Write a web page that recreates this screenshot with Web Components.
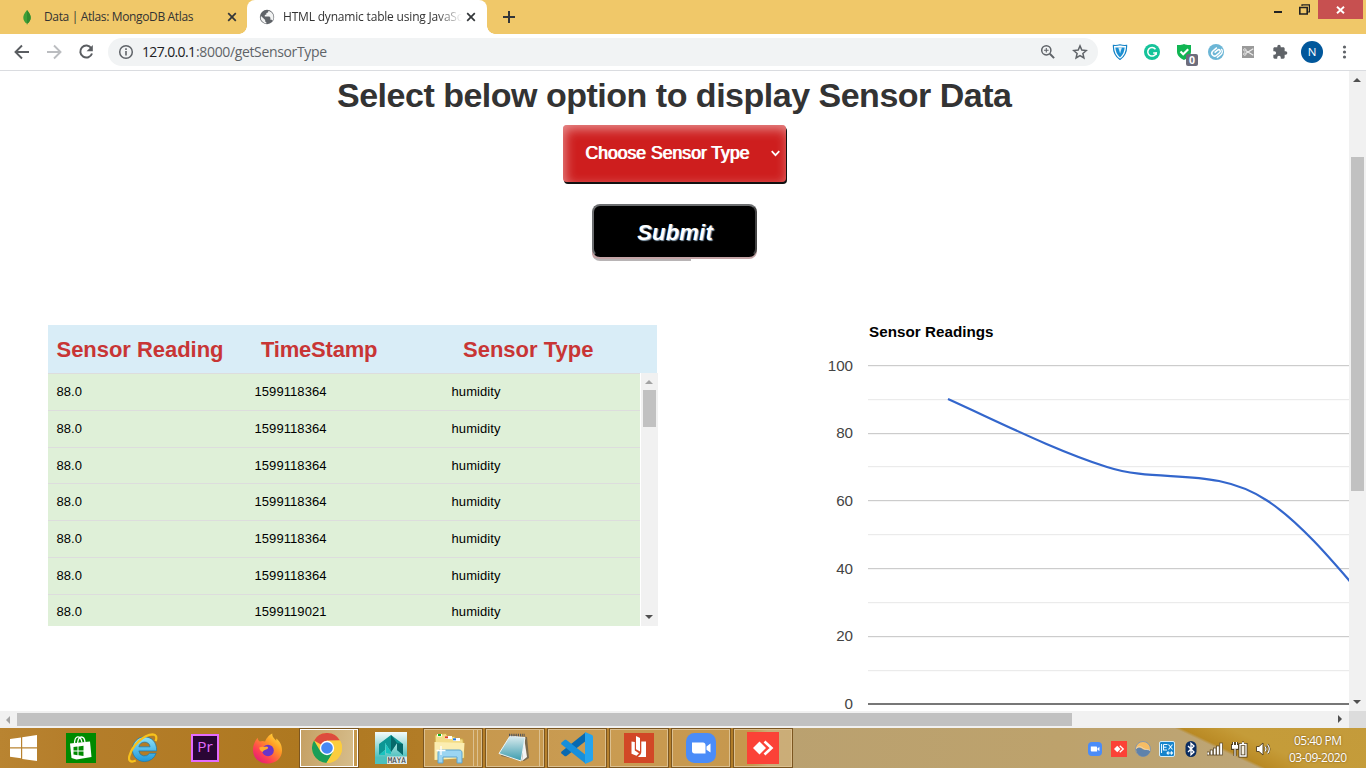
<!DOCTYPE html>
<html lang="en">
<head>
<meta charset="utf-8">
<title>HTML dynamic table using JavaScript</title>
<style>
html,body{margin:0;padding:0;width:1366px;height:768px;overflow:hidden;background:#fff;font-family:"Liberation Sans",Arial,sans-serif}
</style>
</head>
<body>
<desktop-screen></desktop-screen>
<script>
const define=(name,html,after)=>{
  const t=document.createElement('template');
  t.innerHTML=html;
  customElements.define(name,class extends HTMLElement{
    connectedCallback(){
      if(this.shadowRoot)return;
      this.attachShadow({mode:'open'}).appendChild(t.content.cloneNode(true));
      if(after)after.call(this,this.shadowRoot);
    }
  });
};

/* Single line of text that is tracked to a given advance width. */
define('fit-text',`<style>:host{display:inline-block;white-space:pre}span{display:inline-block}</style><span></span>`,function(r){
  const s=r.querySelector('span'),w=parseFloat(this.getAttribute('w'));
  s.textContent=this.getAttribute('text');
  const n=s.textContent.length,cur=s.getBoundingClientRect().width;
  if(w&&cur){const d=(w-cur)/(n-1);s.style.letterSpacing=d+'px';s.style.marginRight=-d+'px';}
});

const ICONS={
leaf:[20,20,`<path d="M10 3C7 6.500 6.200 8.600 6.300 11c.1 2.600 1.700 4.500 3.400 5.600L10 18l.3-1.400c1.700-1.100 3.300-3 3.400-5.600C13.800 8.600 13 6.500 10 3z" fill="#3fa037"/><path d="M10 3c3 3.500 3.800 5.600 3.700 8-.1 2.600-1.700 4.500-3.400 5.600L10 18z" fill="#318b2f"/>`],
globe:[16,16,`<circle cx="8" cy="8" r="7.200" fill="#5f6368"/><path d="M2 7l4.200 4v1.400l1.200 1v1C4 14 1.600 11.500 1.700 8zM9.500 1.800L9 3.500 7.400 4v1.600L5.800 6v1.500h4.600l1 1.300v2h1.500l.9 1C15 9.500 15 5.500 12 3z" fill="#fff" opacity=".92"/>`],
x:[10,10,`<path d="M1.200 1.200l7.600 7.600M8.800 1.200L1.200 8.800" stroke="#333639" stroke-width="1.700"/>`],
plus:[12,12,`<path d="M6 0v12M0 6h12" stroke="#333639" stroke-width="2"/>`],
back:[16,16,`<path d="M15 8H2M8 1.500L1.500 8 8 14.500" fill="none" stroke="#5a5d61" stroke-width="1.900"/>`],
fwd:[16,16,`<path d="M1 8h13M8 1.500L14.500 8 8 14.500" fill="none" stroke="#bbbdc0" stroke-width="1.900"/>`],
reload:[16,16,`<path d="M13.300 4.200A6 6 0 1 0 14 9.500" fill="none" stroke="#5a5d61" stroke-width="2"/><path d="M14.800 1v6.200H8.600z" fill="#5a5d61"/>`],
info:[16,16,`<circle cx="8" cy="8" r="6.300" fill="none" stroke="#5f6368" stroke-width="1.500"/><path d="M8 7v4.500M8 4.300v1.700" stroke="#5f6368" stroke-width="1.600"/>`],
mag:[16,16,`<circle cx="6.300" cy="6.300" r="4.600" fill="none" stroke="#5f6368" stroke-width="1.500"/><path d="M9.800 9.800l4.300 4.300" stroke="#5f6368" stroke-width="2"/><path d="M6.300 4v4.600M4 6.300h4.600" stroke="#5f6368" stroke-width="1.100"/>`],
star:[16,16,`<path d="M8 1.900l1.800 4.200 4.500.4-3.400 3 1 4.500L8 11.600 4.100 14l1-4.500-3.400-3 4.500-.4z" fill="none" stroke="#5f6368" stroke-width="1.500"/>`],
vshield:[16,16,`<path d="M8 .8c2.200.7 4.600.8 6.600.6.2 6-1.600 11-6.600 14C3 12.400 1.200 7.400 1.400 1.400 3.400 1.600 5.800 1.500 8 .8z" fill="#fff" stroke="#1583c7" stroke-width="1.200"/><path d="M3.300 3.600h9.400c-.3 4-1.700 7.300-4.700 9.900C5 10.900 3.600 7.600 3.300 3.600z" fill="#1b8fd2"/><path d="M6.300 3.600h3.600L8.100 9.500z" fill="#d7eefa"/>`],
gram:[16,16,`<circle cx="8" cy="8" r="8" fill="#15c39a"/><path d="M11.500 5.200A4.300 4.300 0 1 0 12.200 9H9.200" fill="none" stroke="#fff" stroke-width="1.500"/><path d="M12.200 8.300v2.800" stroke="#fff" stroke-width="1.300"/>`],
check:[22,22,`<path d="M8 0c2 1 4.500 1.200 7 1v6.500c0 4-3 6.500-7 8.500-4-2-7-4.500-7-8.500V1c2.500.2 5 0 7-1z" fill="#10b552"/><path d="M4.500 7.500l2.700 2.800 5-5" stroke="#fff" stroke-width="2.100" fill="none"/><rect x="10" y="10" width="12" height="12" rx="2" fill="#6d6d7c"/><text x="16" y="19.800" font-size="10.500" font-weight="bold" fill="#fff" text-anchor="middle" font-family="Open Sans,sans-serif">0</text>`],
swirl:[16,16,`<circle cx="8" cy="8" r="8" fill="#6cb6d6"/><g transform="rotate(-40 8 8)" fill="none" stroke="#fff" stroke-width="1.500"><path d="M11.500 5.200H6.200a2.800 2.800 0 0 0 0 5.600h4.300a1.600 1.600 0 0 0 0-3.200H6.500"/><path d="M5 13h5.500a3.800 3.800 0 0 0 3.500-4"/></g>`],
cut:[14,14,`<rect x="1" y="1" width="12" height="12" fill="#9a9a9a"/><path d="M12.300 3.700L5 8.300M12.300 10.300L5 5.700" stroke="#eee" stroke-width="1.100"/><circle cx="3.800" cy="4.900" r="1.200" fill="none" stroke="#eee" stroke-width=".9"/><circle cx="3.800" cy="9.100" r="1.200" fill="none" stroke="#eee" stroke-width=".9"/>`],
puzzle:[24,24,`<path fill="#5f6368" d="M20.500 11H19V7c0-1.100-.9-2-2-2h-4V3.500a2.500 2.500 0 0 0-5 0V5H4c-1.100 0-2 .9-2 2v3.800h1.500a2.700 2.700 0 0 1 0 5.400H2V20c0 1.100.9 2 2 2h3.800v-1.500a2.700 2.700 0 0 1 5.400 0V22H17c1.100 0 2-.9 2-2v-4h1.500a2.500 2.500 0 0 0 0-5z"/>`],
avatar:[22,22,`<circle cx="11" cy="11" r="11" fill="#01579b"/><text x="11" y="15" text-anchor="middle" font-family="Open Sans,sans-serif" font-size="11.500" fill="#fff">N</text>`],
dots:[16,16,`<g fill="#5f6368"><circle cx="8.500" cy="3" r="1.600"/><circle cx="8.500" cy="8" r="1.600"/><circle cx="8.500" cy="13" r="1.600"/></g>`],
up:[8,4,`<path d="M0 4L4 0l4 4z" fill="currentColor"/>`],
down:[8,4,`<path d="M0 0l4 4 4-4z" fill="currentColor"/>`],
left:[4,8,`<path d="M4 0L0 4l4 4z" fill="currentColor"/>`],
right:[4,8,`<path d="M0 0l4 4-4 4z" fill="currentColor"/>`],
win:[27,26,`<path d="M0 4l11-1.600V12.300H0zM12.200 2.200L27 0v12.300H12.200zM0 13.500h11v9.800L0 21.800zM12.200 13.500H27V26l-14.800-2.100z" fill="#fff"/>`],
store:[30,30,`<rect width="30" height="30" fill="#008a00"/><path d="M4 10.500l20-2 1.500 15.500-15 2.500L5.500 25z" fill="#fff"/><path d="M8.500 11c0-9 6-9.500 7.500-1.500M11.500 10.500c1-9 7-8 7.500-1" fill="none" stroke="#fff" stroke-width="1.300"/><path d="M7.500 14l4-.5V17.500h-4zM12.500 13.400l5-.6v4.700h-5zM7.500 18.500h4v3.700l-4-.6zM12.500 18.500h5V23l-5-.7z" fill="#008a00"/>`],
ie:[32,32,`<defs><linearGradient id="a" x2="0" y2="1"><stop stop-color="#8fe3fb"/><stop offset="1" stop-color="#2097d8"/></linearGradient></defs><path d="M29 21A12.600 12.600 0 0 1 17 29.500C10 29.500 4.500 24 4.500 17S10 4 17 4s12.800 5 12.600 14.500H11.200a6 6 0 0 0 11 2.500zM11.200 14.300h11.600c-.6-6.600-10.600-6.600-11.600 0z" fill="url(#a)" stroke="#1478b4" stroke-width=".7" fill-rule="evenodd"/><path d="M8 28.500C2.500 31 0 28.500 1.500 23.500 4.500 13 16 1.800 25.500 1.500c3.500 0 4.600 2.700 3 7" fill="none" stroke="#f8c21c" stroke-width="2.300"/>`],
pr:[28,28,`<rect x="1" y="1" width="26" height="26" fill="#2a0634" stroke="#e36bff" stroke-width="2"/><text x="6.300" y="18" font-family="Open Sans,sans-serif" font-size="15" textLength="15.500" lengthAdjust="spacingAndGlyphs" fill="#e36bff">Pr</text>`],
ff:[32,32,`<defs><linearGradient id="f" x1="1" x2=".2" y2="1"><stop stop-color="#fff14a"/><stop offset=".4" stop-color="#ff9a24"/><stop offset=".75" stop-color="#ff4052"/><stop offset="1" stop-color="#e01a7c"/></linearGradient></defs><path d="M6 5c0 2 .7 3 2 3.800 2-.8 4-.8 5.500 0C15 5 18 1.500 21 .5c-.5 3 1.500 5 4 7.500 0-1 0-1.500.2-2.200C30 10 31 14 31 18c0 8-6.500 13.500-15 13.500S1 25.500 1 17.500C1 13 3 8 6 5z" fill="url(#f)"/><circle cx="16.500" cy="18" r="6" fill="#6a35c8"/><path d="M7.500 15c3-2 5 0 8-1 2 1 1 2.500-1 3-2 .6-2.500 1-3.500 2.500-2-.5-3.500-2.500-3.500-4.500z" fill="#ffab2e"/>`],
chrome:[30,30,`<circle cx="15" cy="15" r="15" fill="#fbcd3e"/><path d="M15 15L2 7.500A15 15 0 0 1 28 7.500L15 8z" fill="#dd4b3e"/><path d="M2 7.500A15 15 0 0 0 14.500 30L21.500 18.500 8.500 18.500z" fill="#1a9e58"/><path d="M28 7.500H15v7l6.500 4L14.500 30A15 15 0 0 0 28 7.500z" fill="#fbcd3e"/><circle cx="15" cy="15" r="7.200" fill="#fff"/><circle cx="15" cy="15" r="5.800" fill="#4688f4"/>`],
maya:[32,32,`<defs><linearGradient id="m" x2="0" y2="1"><stop stop-color="#f4fbfb"/><stop offset=".8" stop-color="#4cc0bd"/></linearGradient></defs><rect width="32" height="32" fill="url(#m)"/><path d="M4 23V12L16 3l12 9v11l-6-5v-7l-6 9-6-9v7z" fill="#0c9694"/><path d="M16 3l6 8-6 9zM28 12v11l-6-5v-7z" fill="#06686a"/><path d="M10 11l6 9v2l-5-1zM4 23l6-5v5z" fill="#18c3bf"/><rect x="12" y="24.500" width="20" height="7.500" fill="#dfe8e8"/><text x="12.800" y="31.200" font-family="DejaVu Sans Mono,monospace" font-size="7.800" textLength="18" lengthAdjust="spacingAndGlyphs" fill="#333">MAYA</text>`],
folder:[32,32,`<path d="M2 3l11-1.500 1.500 2.500 7 .5 1 2 7.500.5 1.500 19-29 2z" fill="#f3dc86" stroke="#c9a545"/><path d="M1.500 10l30 1-1 15-29 2z" fill="#fbedb0"/><rect x="4" y="2" width="5" height="2.500" fill="#fff"/><rect x="5" y="2" width="3" height="2" fill="#13b31b"/><rect x="12" y="4" width="7" height="3" fill="#fff"/><rect x="12" y="4.300" width="3" height="2" fill="#df4325"/><rect x="20" y="6" width="7" height="3" fill="#fff"/><rect x="20" y="6.300" width="3" height="2" fill="#2478df"/><path d="M5 31V21c0-2 1-3 3-3h18c2 0 3 1 3 3v10h-5v-6H10v6z" fill="#9bd5f2" stroke="#5ca3cc"/><path d="M8 14v9M3.500 18.500h9" stroke="#fff" stroke-width="1.300"/>`],
note:[32,32,`<defs><linearGradient id="n" x2="0" y2="1"><stop stop-color="#dcecef"/><stop offset="1" stop-color="#399bad"/></linearGradient></defs><path d="M13 3l17 2 2 21-5 3L4 24z" fill="#7a6a4e"/><path d="M27 5l3 20-5 4z" fill="#f3f3f3"/><path d="M13 4l15 1.500L24 29 2 21.500z" fill="url(#n)" stroke="#edf5f6"/><path d="M12 3h16" stroke="#555" stroke-width="2.400" stroke-dasharray="1.200 1"/>`],
code:[32,32,`<path d="M.5 21.500L3.500 24c.8.500 1.400.3 2-.1L26 8 24.500.5.6 19.400c-.6.700-.6 1.400-.1 2.100z" fill="#0869b0"/><path d="M.5 10.500L3.500 8c.8-.5 1.400-.3 2 .1L26 24l-1.500 7.500L.6 12.600c-.6-.7-.6-1.400-.1-2.100z" fill="#178fdb"/><path d="M24 0l7 3c.7.400 1 .9 1 1.700v22.600c0 .8-.4 1.300-1 1.700l-7 3z" fill="#25a4ef"/>`],
book:[30,30,`<rect width="30" height="30" fill="#d24726"/><path d="M7.500 8.500l3.300.6V17.500l4.200 2.800-2.500 2.400-5-2zM12 3l4 2v13.500L12 16.300zM17.300 8.500H22V24h-8l1-1.200c1.700-1 2.300-2.300 2.300-4.300z" fill="#fff"/>`],
zoom:[30,30,`<rect width="30" height="30" rx="8.500" fill="#4a8cf8"/><path d="M6 9.500h11c1.500 0 2.500 1 2.500 2.500v8.500h-11C7 20.500 6 19.500 6 18zM20.500 13.500L24.500 10.500V19.500L20.500 16.700z" fill="#fff"/>`],
desk:[32,32,`<rect width="32" height="32" fill="#fb4237"/><path d="M6 16l6.500-6.500L19 16l-6.500 6.500z" fill="#fff"/><path d="M17.500 9.500L24.500 16l-7 6.500" fill="none" stroke="#fff" stroke-width="2.600"/>`],
cloud:[16,16,`<circle cx="8" cy="8" r="7.500" fill="#f6bd65" stroke="#8797a8"/><path d="M1 8.500c3-4 5.500-1 7.500 0s5-1 6.700 1.500C14 14 11 15.500 8 15.500S1.500 13 1 8.500z" fill="#5f82ab"/><path d="M1 7.500c3-3 5.500-1.500 7.500 0s4.500.5 6.500 2" stroke="#e8e2d6" stroke-width=".7" fill="none"/>`],
intel:[16,16,`<rect x=".5" y=".5" width="15" height="15" rx="1.500" fill="#1583cc" stroke="#d4ecf8"/><path d="M4.500 3.500h4M4.500 3.500v5.500h3.500M4.500 6.200h3M9.500 3.500l4 5M13.500 3.500l-4 5M8 12h5.500M9.500 10.500L8 12l1.500 1.500M12 10.500l1.500 1.500-1.500 1.500M2.500 3v9" stroke="#e8f7ff" stroke-width="1.100" fill="none"/>`],
bt:[16,18,`<rect x="2.500" y="1" width="11" height="16" rx="5.500" fill="#0a2c61"/><path d="M5 6l6 6-3 2.700V3.300L11 6l-6 6" fill="none" stroke="#fff" stroke-width="1.300"/>`],
sig:[16,14,`<g fill="#fff" stroke="#4d3b1b" stroke-width=".7"><rect x="0" y="10" width="2.600" height="3"/><rect x="3.200" y="8" width="2.600" height="5"/><rect x="6.400" y="6" width="2.600" height="7"/><rect x="9.600" y="4" width="2.600" height="9"/><rect x="12.800" y="1" width="2.800" height="12"/></g>`],
bat:[17,18,`<g fill="none" stroke="#4d3b1b" stroke-width="3"><path d="M9 4.500h6V16H9zM11 3h2M1.500 5.500h5v3h-5zM4 9v7M2.500 2v4M5.500 2v4"/></g><path d="M9 4.500h6V16H9zM11 3h2" fill="#4d3b1b" stroke="#fff" stroke-width="1.300"/><path d="M10.600 6h2.800v8.500h-2.800z" fill="#f5efdf"/><path d="M1.500 5.500h5v2.700h-5zM4 9v7M2.500 2v4M5.500 2v4" fill="#fff" stroke="#fff" stroke-width="1.100"/>`],
vol:[17,16,`<path d="M1.500 5.500h2.500L8 2v12L4 10.500H1.500z" fill="#fff" stroke="#4d3b1b" stroke-width=".9"/><g fill="none" stroke="#4d3b1b" stroke-width="2.300"><path d="M10 5.500q2 2.500 0 5M12.500 3.500q3.500 4.500 0 9"/></g><g fill="none" stroke="#fff" stroke-width="1.200"><path d="M10 5.500q2 2.500 0 5M12.500 3.500q3.500 4.500 0 9"/></g>`],
chev:[9,7,`<path d="M.7 1.200l3.800 4 3.800-4" fill="none" stroke="#fff" stroke-width="1.700"/>`],
restore:[11,11,`<path d="M3 2V.8h7.400V8H9" fill="none" stroke="#222" stroke-width="1.200"/><path d="M.8 3.500h7.400V10H.8z" fill="none" stroke="#222" stroke-width="1.600"/>`],
close:[9,8,`<path d="M1 .7l7 6.600M8 .7L1 7.300" stroke="#fff" stroke-width="1.900"/>`]
};
define('ui-icon',`<style>:host{display:block;flex:none}svg{display:block}</style>`,function(r){
  const [w,h,body]=ICONS[this.getAttribute('name')],s=+this.getAttribute('size')||w;
  const d=document.createElement('div');
  d.innerHTML=`<svg width="${s}" height="${s*h/w}" viewBox="0 0 ${w} ${h}">${body}</svg>`;
  r.appendChild(d);
});

define('browser-tabs',`<style>
:host{display:flex;height:34px;background:#f0c869;font:12px "Open Sans","Noto Sans",sans-serif;color:#333;position:relative}
.tab{display:flex;align-items:center;box-sizing:border-box}
.one{width:247px;padding:0 10px 0 17px}
.two{width:240px;background:#fff;border-radius:8px 8px 0 0;padding:0 11px 0 12px;position:relative}
.two:before,.two:after{content:"";position:absolute;bottom:0;width:8px;height:8px}
.two:before{left:-8px;background:radial-gradient(circle at 0 0,transparent 7.5px,#fff 8px)}
.two:after{right:-8px;background:radial-gradient(circle at 100% 0,transparent 7.5px,#fff 8px)}
.name{flex:1;overflow:hidden;white-space:nowrap;margin-top:-1px}
.one .name{margin-left:7px}.two .name{margin-left:8px;margin-right:2px;-webkit-mask-image:linear-gradient(90deg,#000 154px,transparent 179px)}
.new{padding:11px 0 0 16px}
.ctl{margin-left:auto;display:flex;padding-right:3px;align-items:flex-start}
.min{width:8px;height:2px;background:#222;margin:11px 17px 0 0}
.ctl ui-icon.r{margin:4px 8px 0 0}
.cl{width:45px;height:19px;background:#c75050;display:grid;place-items:center}
</style>
<div class="tab one"><ui-icon name="leaf"></ui-icon><div class="name"><fit-text text="Data | Atlas: MongoDB Atlas" w="149.500"></fit-text></div><ui-icon name="x"></ui-icon></div>
<div class="tab two"><ui-icon name="globe"></ui-icon><div class="name"><fit-text text="HTML dynamic table using JavaSc" w="179.500"></fit-text></div><ui-icon name="x"></ui-icon></div>
<div class="new"><ui-icon name="plus"></ui-icon></div>
<div class="ctl"><div class="min"></div><ui-icon class="r" name="restore"></ui-icon><div class="cl"><ui-icon name="close"></ui-icon></div></div>`);

define('browser-toolbar',`<style>
:host{display:flex;height:36px;align-items:center;background:#fff;border-bottom:1px solid #dadce0;font:14px "Open Sans","Noto Sans",sans-serif;color:#5f6368}
.b{width:32px;display:grid;place-items:center}
.nav{display:flex;padding:0 6px}
.box{width:990px;height:28px;border-radius:14px;background:#f1f3f4;display:flex;align-items:center;box-sizing:border-box;padding:0 2px 0 10px;margin-right:6px}
.url{margin-left:8px;flex:1;display:flex;margin-top:-1px}.host{color:#202124}
.chk{padding:6px 0 0 6px;width:26px}
</style>
<div class="nav"><div class="b"><ui-icon name="back"></ui-icon></div><div class="b"><ui-icon name="fwd"></ui-icon></div><div class="b"><ui-icon name="reload"></ui-icon></div></div>
<div class="box"><ui-icon name="info"></ui-icon><div class="url"><fit-text class="host" text="127.0.0.1" w="54"></fit-text><fit-text text=":8000/getSensorType" w="131"></fit-text></div><div class="b"><ui-icon name="mag"></ui-icon></div><div class="b"><ui-icon name="star"></ui-icon></div></div>
<div class="b"><ui-icon name="vshield"></ui-icon></div><div class="b"><ui-icon name="gram"></ui-icon></div><div class="b chk"><ui-icon name="check"></ui-icon></div><div class="b"><ui-icon name="swirl"></ui-icon></div><div class="b"><ui-icon name="cut"></ui-icon></div><div class="b"><ui-icon name="puzzle" size="16"></ui-icon></div><div class="b"><ui-icon name="avatar"></ui-icon></div><div class="b"><ui-icon name="dots"></ui-icon></div>`);

define('sensor-form',`<style>
:host{display:flex;flex-direction:column;align-items:center;width:1349px}
h1,.sel,button,.shade{flex:none}
h1{margin:4px 0 0;font-size:34px;line-height:41px;color:#333}
.sel{display:flex;align-items:center;box-sizing:border-box;width:223px;height:57px;margin-top:9px;padding:0 6px 0 22px;border-radius:4px;background:#ce1e1e;box-shadow:1px 2px 0 #111,inset 2px 4px 12px rgba(255,255,255,.5);color:#fff;font-size:17.600px;text-shadow:1px 0 0 #fff}
.sel fit-text{flex:1}
button{all:unset;flex:none;display:block;box-sizing:border-box;width:165px;height:53px;margin-top:22px;border:2px solid #6c6e70;border-right-color:#444;border-bottom-color:#000;border-radius:8px;background:#000;box-shadow:0 2px 0 #c4a4a6;color:#fff;text-align:center;padding-left:1px;font:italic bold 22px/53px "Liberation Sans",Arial,sans-serif;text-shadow:1px 1px 1px #8fa6b8}
.shade{width:99px;height:10px;margin-top:-6px;align-self:flex-start;margin-left:592px;background:linear-gradient(#c4a4a6 0 7px,#b8b4b5 7px);border-radius:0 0 0 8px;position:relative;z-index:-1}
</style>
<h1><fit-text text="Select below option to display Sensor Data" w="675"></fit-text></h1>
<div class="sel"><fit-text text="Choose Sensor Type" w="164"></fit-text><ui-icon name="chev"></ui-icon></div>
<button><fit-text text="Submit" w="75.500"></fit-text></button><div class="shade"></div>`);

/* Scroll bar drawn along either axis; gap and thumb place the handle. */
class ScrollTrack extends HTMLElement{
  connectedCallback(){
    if(this.shadowRoot)return;
    const v=this.hasAttribute('vertical'),g=+this.getAttribute('gap')||0,n=this.getAttribute('thumb');
    this.attachShadow({mode:'open'}).innerHTML=`<style>
:host{display:flex;flex-direction:${v?'column':'row'};background:#f1f1f1;align-items:center;color:#505050}
.e{width:17px;height:17px;box-sizing:border-box;padding:0 1px 1px 0;display:grid;place-items:center;flex:none}
.first{color:${this.hasAttribute('attop')?'#a3a3a3':'#505050'};padding-bottom:0;padding-top:1px}
.t{background:#c1c1c1;${v?`width:13px;height:${n}px;margin-top:${g}px`:`height:13px;width:${n}px;margin-left:${g}px`}}
.f{flex:1}</style><div class="e first"><ui-icon name="${v?'up':'left'}"></ui-icon></div><div class="t"></div><div class="f"></div><div class="e"><ui-icon name="${v?'down':'right'}"></ui-icon></div>`;
  }
}
customElements.define('scroll-track',ScrollTrack);

define('sensor-table',`<style>
:host{display:block;width:610px;height:301px;overflow:hidden;font-size:13px;color:#000}
.head{display:flex;width:609px;height:48px;background:#d9edf7;color:#c83535;font-weight:bold;font-size:22px;line-height:49px}
.head fit-text:nth-child(1){margin-left:8.500px;width:204.500px}.head fit-text:nth-child(2){width:202px}
.body{display:flex;height:253px}
.rows{width:592px;height:253px;overflow:hidden;background:#dff0d8}
.row{display:grid;grid-template-columns:198px 197px 1fr;padding-left:8.500px;height:35.820px;border-top:1px solid #ddd;line-height:36px}
.row:last-child{line-height:34.500px}
scroll-track{margin-left:1px;width:17px}
</style>
<div class="head"><fit-text text="Sensor Reading" w="167"></fit-text><fit-text text="TimeStamp" w="116.500"></fit-text><fit-text text="Sensor Type" w="130.500"></fit-text></div>
<div class="body"><div class="rows"></div><scroll-track vertical attop thumb="37"></scroll-track></div>`,function(r){
  const data=['1599118364','1599118364','1599118364','1599118364','1599118364','1599118364','1599119021'];
  r.querySelector('.rows').innerHTML=data.map(t=>`<div class="row"><div><fit-text text="88.0" w="25.500"></fit-text></div><div><fit-text text="${t}" w="72"></fit-text></div><div><fit-text text="humidity" w="49"></fit-text></div></div>`).join('');
});

define('sensor-chart',`<style>:host{display:block}svg{display:block}text{font-family:"Liberation Sans",Arial,sans-serif;font-size:15.200px}</style>`,function(r){
  let g='';
  for(let i=0;i<=10;i++){
    const y=50.400+i*33.850,v=100-i*10,major=i%2===0;
    const yy=Math.round(y-.5);
    g+=`<rect x="58" y="${i===10?388:yy}" width="481" height="${i===10?2:1.200}" fill="${i===10?'#777':major?'#ccc':'#ebebeb'}"/>`;
    if(major)g+=`<text x="43" y="${y+5.200}" text-anchor="end" fill="#444" textLength="${String(v).length*8.400}">${v}</text>`;
  }
  const d=document.createElement('div');
  d.innerHTML=`<svg width="539" height="396" viewBox="0 0 539 396">${g}<text x="59" y="22" font-weight="bold" textLength="124.500">Sensor Readings</text><path d="M138 84C191 108 244 135 297 152C350 169 404 150.500 457 185.500C510 220 563 301 616 350" fill="none" stroke="#3366cc" stroke-width="2.200"/></svg>`;
  r.appendChild(d);
});

define('page-view',`<style>
:host{display:grid;grid-template-columns:1349px 17px;grid-template-rows:640px 17px;height:657px;background:#fff}
.page{overflow:hidden;isolation:isolate}
.cols{display:flex;justify-content:space-between;margin-top:54px}
sensor-form{height:190px}
sensor-table{margin:10px 0 0 48px}
.corner{background:#dcdcdc}
</style>
<div class="page"><sensor-form></sensor-form><div class="cols"><sensor-table></sensor-table><sensor-chart></sensor-chart></div></div>
<scroll-track vertical gap="69" thumb="334"></scroll-track><scroll-track attop thumb="1055"></scroll-track><div class="corner"></div>`);

define('task-tile',`<style>
:host{display:block;width:62px;height:40px;box-sizing:border-box;padding:0 1px}
.o{height:40px;display:flex;box-sizing:border-box}
.c{flex:1;display:grid;place-items:center}
:host([open]) .o{border:1px solid #7c5620}
:host([open]) .c{border:1px solid #dcc090;background:rgba(226,190,132,.42)}
:host([active]) .c{border-color:#fff;background:linear-gradient(100deg,#c5a063,#d6bd8c)}
.s{display:none;border:1px solid #dcc090;border-left:0;background:rgba(226,190,132,.42);width:3px}
:host([stack]) .s{display:block}
:host([stack=""]) .k{display:none}
:host([active]) .s{border-color:#fff}
</style><div class="o"><div class="c"><slot></slot></div><div class="s"></div><div class="s k"></div></div>`);

define('task-bar',`<style>
:host{display:flex;height:40px;color:#fff;font:12px/17px "Open Sans","Noto Sans",sans-serif;background:
linear-gradient(25.200deg,transparent 536px,#b98a25 539px,#c0932e 550px,#c59c39 560px,#c49b3b 100%),
linear-gradient(90deg,#b98431 0,#b57e2b 65px,#ae7820 300px,#b8822f 600px,#b17c27 752px,#baa170 768px,#bda26c 1060px,#bda77c 1366px)}
.start{width:50px;display:grid;place-items:center;padding:0 3px 1px 0;box-sizing:border-box}
.tray{margin-left:auto;display:flex}
.tray div{width:24px;display:grid;place-items:center}
.tray div:nth-child(-n+8){padding-top:2px}
.clock{width:86px!important;margin-right:5px;align-content:center;padding-top:2px;box-sizing:border-box;text-shadow:0 0 2px #76500f}
</style>
<div class="start"><ui-icon name="win"></ui-icon></div>
<task-tile><ui-icon name="store"></ui-icon></task-tile>
<task-tile><ui-icon name="ie" size="31"></ui-icon></task-tile>
<task-tile><ui-icon name="pr"></ui-icon></task-tile>
<task-tile><ui-icon name="ff" size="31"></ui-icon></task-tile>
<task-tile open active stack><ui-icon name="chrome"></ui-icon></task-tile>
<task-tile><ui-icon name="maya"></ui-icon></task-tile>
<task-tile open stack="3"><ui-icon name="folder"></ui-icon></task-tile>
<task-tile open stack><ui-icon name="note"></ui-icon></task-tile>
<task-tile open><ui-icon name="code"></ui-icon></task-tile>
<task-tile open><ui-icon name="book"></ui-icon></task-tile>
<task-tile open><ui-icon name="zoom"></ui-icon></task-tile>
<task-tile open><ui-icon name="desk"></ui-icon></task-tile>
<div class="tray"><div><ui-icon name="zoom" size="14"></ui-icon></div><div><ui-icon name="desk" size="16"></ui-icon></div><div><ui-icon name="cloud"></ui-icon></div><div><ui-icon name="intel"></ui-icon></div><div><ui-icon name="bt"></ui-icon></div><div><ui-icon name="sig"></ui-icon></div><div><ui-icon name="bat"></ui-icon></div><div><ui-icon name="vol"></ui-icon></div>
<div class="clock"><fit-text text="05:40 PM" w="48"></fit-text><fit-text text="03-09-2020" w="58"></fit-text></div></div>`);

define('desktop-screen',`<style>:host{display:flex;flex-direction:column;width:1366px;height:768px;overflow:hidden}browser-tabs,browser-toolbar,page-view,task-bar{flex:none}</style>
<browser-tabs></browser-tabs><browser-toolbar></browser-toolbar><page-view></page-view><task-bar></task-bar>`);
</script>
</body>
</html>
